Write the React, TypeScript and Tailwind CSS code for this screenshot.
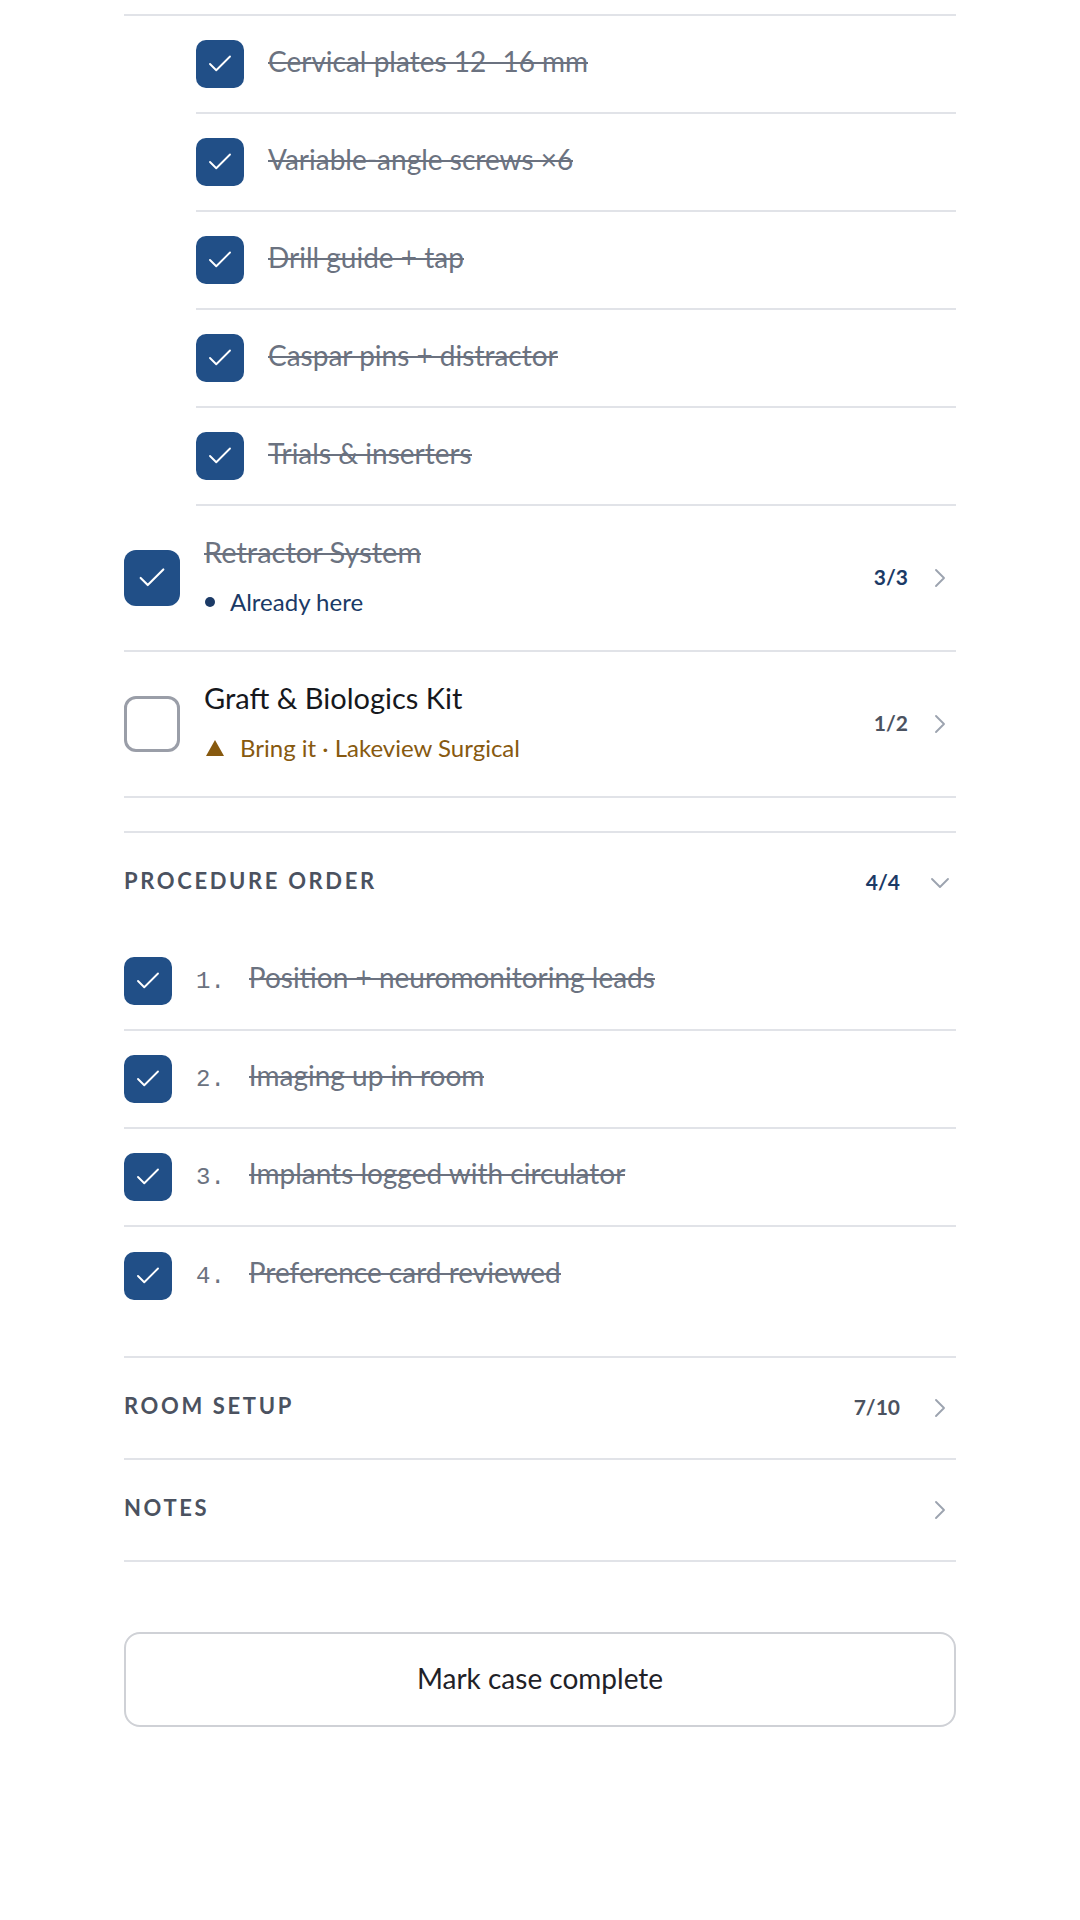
import React from 'react';

type Tone = 'here' | 'bring';

interface KitRow {
  id: string;
  name: string;
  done: boolean;
  status: string;
  tone: Tone;
  count: string;
}

const CERVICAL_PARTS = [
  'Cervical plates 12–16 mm',
  'Variable-angle screws ×6',
  'Drill guide + tap',
  'Caspar pins + distractor',
  'Trials & inserters',
];

const KITS: KitRow[] = [
  { id: 'retractor', name: 'Retractor System', done: true, status: 'Already here', tone: 'here', count: '3/3' },
  { id: 'graft', name: 'Graft & Biologics Kit', done: false, status: 'Bring it · Lakeview Surgical', tone: 'bring', count: '1/2' },
];

const STEPS = [
  'Position + neuromonitoring leads',
  'Imaging up in room',
  'Implants logged with circulator',
  'Preference card reviewed',
];

const FONT = "font-['Lato','Noto_Sans',sans-serif]";

const CheckIcon = ({ className }: { className: string }) => (
  <svg viewBox="0 0 24 24" fill="none" stroke="white" strokeWidth={1.5} strokeLinecap="round" strokeLinejoin="round" className={className}>
    <path d="M20 6 9 17l-5-5" />
  </svg>
);

const Chevron = ({ down = false }: { down?: boolean }) => (
  <svg viewBox="0 0 24 24" fill="none" stroke="#9ca3af" strokeWidth={1.4} strokeLinecap="round" strokeLinejoin="round" className="w-8 h-8 shrink-0">
    <path d={down ? 'm6 9 6 6 6-6' : 'm9 18 6-6-6-6'} />
  </svg>
);

// crossed-out label; the line sits mid x-height
const Struck = ({ children }: { children: React.ReactNode }) => (
  <span className="relative inline-block">
    {children}
    <span className="absolute left-0 right-0 top-[55%] h-[2px] bg-[#6b7280]" />
  </span>
);

// 48px box used for parts and steps
const SmallBox = () => (
  <div className="w-12 h-12 shrink-0 rounded-[10px] bg-[#214f87] flex items-center justify-center">
    <CheckIcon className="w-[30px] h-[30px]" />
  </div>
);

const LargeBox = ({ done }: { done: boolean }) =>
  done ? (
    <div className="w-14 h-14 shrink-0 rounded-[12px] bg-[#214f87] flex items-center justify-center">
      <CheckIcon className="w-[34px] h-[34px]" />
    </div>
  ) : (
    <div className="w-14 h-14 shrink-0 rounded-[12px] border-[3px] border-[#9a9ea8] bg-white" />
  );

const SectionHeader = ({ title, count, navy, down }: { title: string; count?: string; navy?: boolean; down?: boolean }) => (
  <div className="h-[100px] flex items-center justify-between">
    <span className="pb-[4px] text-[22px] font-bold tracking-[0.12em] text-[#4b5260] leading-none">{title}</span>
    <div className="flex items-center gap-6">
      {count && (
        <span className={`pb-[4px] text-[21px] font-bold leading-none ${navy ? 'text-[#1b3a66]' : 'text-[#4b5260]'}`}>{count}</span>
      )}
      <Chevron down={down} />
    </div>
  </div>
);

export default function App() {
  return (
    <div className={`bg-white min-h-screen px-[124px] ${FONT}`}>
      {/* tail of the instrument set row */}
      <div className="h-[16px] border-b-2 border-[#e1e3e8]" />

      <div className="pl-[72px]">
        {CERVICAL_PARTS.map((part) => (
          <div key={part} className="h-[98px] flex items-center gap-6 border-b-2 border-[#e1e3e8]">
            <SmallBox />
            <span className="pb-[6px] text-[28px] leading-none text-[#6b7280]">
              <Struck>{part}</Struck>
            </span>
          </div>
        ))}
      </div>

      {KITS.map((kit) => (
        <div key={kit.id} className="h-[146px] flex items-center gap-6 border-b-2 border-[#e1e3e8]">
          <LargeBox done={kit.done} />
          <div className="flex-1 pb-[5px] flex flex-col gap-[24px]">
            <span className={`text-[29px] leading-none ${kit.done ? 'text-[#6b7280]' : 'text-[#16181d]'}`}>
              {kit.done ? <Struck>{kit.name}</Struck> : kit.name}
            </span>
            {kit.tone === 'here' ? (
              <span className="flex items-center gap-[15px] text-[24px] leading-none text-[#1b3a66]">
                <span className="ml-[1px] w-[10px] h-[10px] rounded-full bg-[#1b3a66]" />
                {kit.status}
              </span>
            ) : (
              <span className="flex items-center gap-4 text-[24px] leading-none text-[#87590f]">
                <svg viewBox="0 0 18 16" className="ml-[2px] w-[18px] h-[16px]">
                  <polygon points="9,0 18,16 0,16" fill="#87590f" />
                </svg>
                {kit.status}
              </span>
            )}
          </div>
          <div className="flex items-center gap-4">
            <span className={`pb-[4px] text-[21px] font-bold leading-none ${kit.done ? 'text-[#1b3a66]' : 'text-[#4b5260]'}`}>{kit.count}</span>
            <Chevron />
          </div>
        </div>
      ))}

      {/* procedure order */}
      <div className="mt-[33px] border-t-2 border-[#e1e3e8] pb-[31px]">
        <SectionHeader title="PROCEDURE ORDER" count="4/4" navy down />
        {STEPS.map((step, i) => (
          <div
            key={step}
            className={`h-[98px] flex items-center gap-6 ${i < STEPS.length - 1 ? 'border-b-2 border-[#e1e3e8]' : ''}`}
          >
            <SmallBox />
            <div className="pb-[6px] flex items-baseline gap-6">
              <span className="font-['Liberation_Mono',monospace] text-[24px] leading-none text-[#6b7280]">{i + 1}.</span>
              <span className="text-[28px] leading-none text-[#6b7280]">
                <Struck>{step}</Struck>
              </span>
            </div>
          </div>
        ))}
      </div>

      <div className="border-t-2 border-[#e1e3e8]">
        <SectionHeader title="ROOM SETUP" count="7/10" />
      </div>
      <div className="border-t-2 border-b-2 border-[#e1e3e8]">
        <SectionHeader title="NOTES" />
      </div>

      <button className="mt-[70px] w-full h-[95px] pb-[4px] rounded-2xl border-2 border-[#cfd1d6] bg-white text-[28px] leading-none text-[#1f2228] flex items-center justify-center">
        Mark case complete
      </button>
    </div>
  );
}
